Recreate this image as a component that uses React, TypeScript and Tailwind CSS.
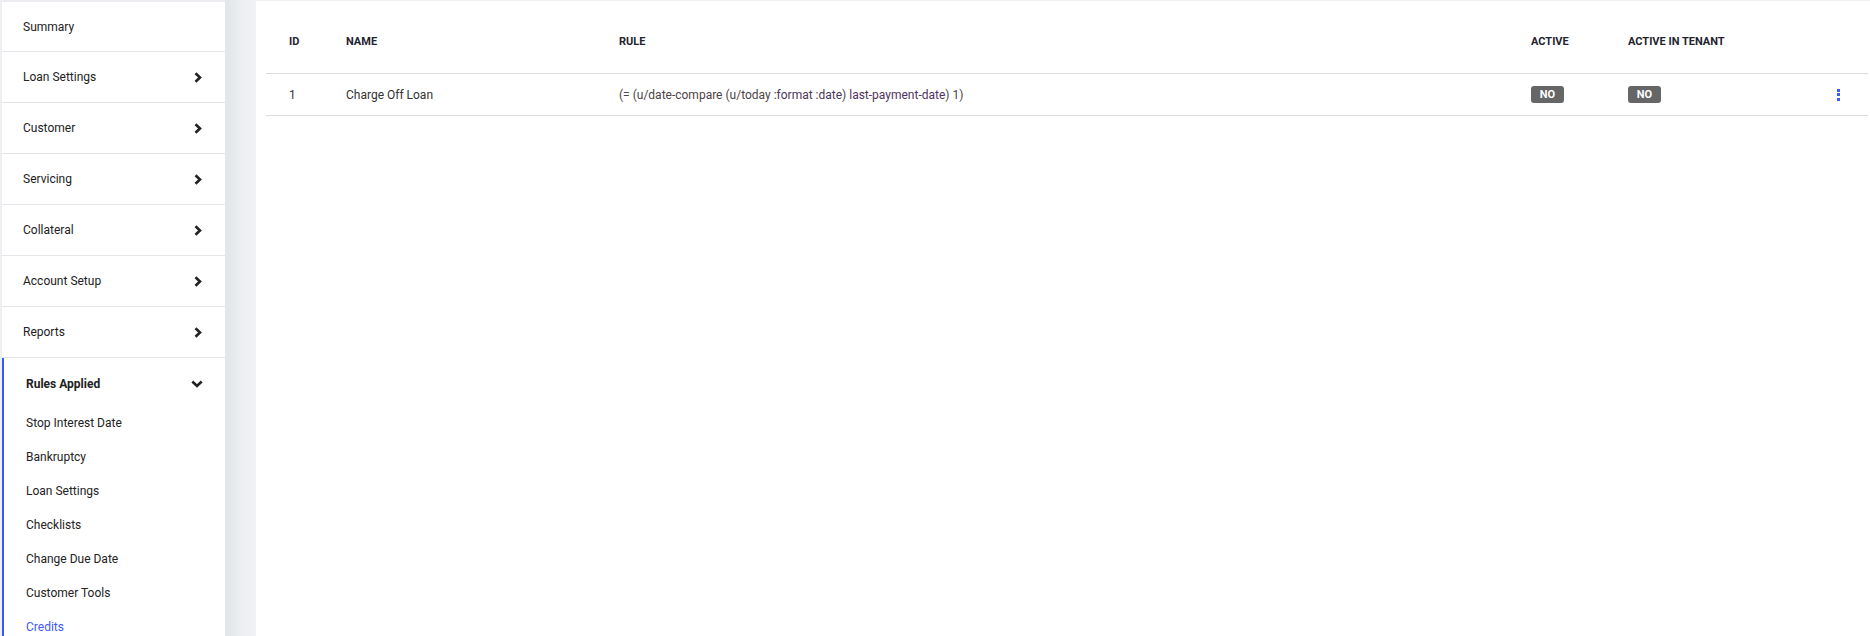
import React from "react";

const font = { fontFamily: "Roboto, 'Noto Sans', Arial, sans-serif" };

function ChevronRight() {
  return (
    <svg width="8" height="11" viewBox="0 0 8 11" className="block">
      <path d="M1.5 1.2 L6 5.5 L1.5 9.8" fill="none" stroke="#222" strokeWidth="2.6" strokeLinejoin="miter" />
    </svg>
  );
}

function ChevronDown() {
  return (
    <svg width="12" height="8" viewBox="0 0 12 8" className="block">
      <path d="M1.3 1.5 L6 6 L10.7 1.5" fill="none" stroke="#222" strokeWidth="2.6" strokeLinejoin="miter" />
    </svg>
  );
}

const topItems = ["Loan Settings", "Customer", "Servicing", "Collateral", "Account Setup", "Reports"];
const subItems = ["Stop Interest Date", "Bankruptcy", "Loan Settings", "Checklists", "Change Due Date", "Customer Tools"];

function Sidebar() {
  return (
    <div className="w-[223px] shrink-0 ml-[2px] mt-[2px] bg-white shadow-[1px_0_3px_rgba(0,0,0,0.06)] flex flex-col text-[12px] text-[#222] overflow-hidden">
      <div className="h-[50px] shrink-0 border-b border-[#e3e5e8] flex items-center pl-[21px]">Summary</div>
      {topItems.map((t) => (
        <div key={t} className="h-[51px] shrink-0 border-b border-[#e3e5e8] flex items-center justify-between pl-[21px] pr-[23px]">
          <span>{t}</span>
          <ChevronRight />
        </div>
      ))}
      <div className="border-l-2 border-[#2f5bff] flex flex-col shrink-0">
        <div className="h-[48px] shrink-0 flex items-center justify-between pl-[22px] pr-[22px] pt-[3px]">
          <span className="font-bold">Rules Applied</span>
          <ChevronDown />
        </div>
        {subItems.map((t) => (
          <div key={t} className="h-[34px] shrink-0 flex items-center pl-[22px]">{t}</div>
        ))}
        <div className="h-[34px] shrink-0 flex items-center pl-[22px] text-[#3d5afe]">Credits</div>
      </div>
    </div>
  );
}

function Badge() {
  return (
    <span className="inline-flex items-center justify-center w-[33px] h-[17px] rounded-[3px] bg-[#666666] text-white text-[11px] font-bold leading-none">
      NO
    </span>
  );
}

function Kebab() {
  return (
    <div className="flex flex-col items-center gap-[1.5px]">
      <span className="block w-[3px] h-[3px] bg-[#3d5afe]" />
      <span className="block w-[3px] h-[3px] bg-[#3d5afe]" />
      <span className="block w-[3px] h-[3px] bg-[#3d5afe]" />
    </div>
  );
}

const cols = "grid grid-cols-[57px_273px_912px_97px_1fr_60px]";

export default function App() {
  return (
    <div style={font} className="w-[1870px] h-[636px] bg-[#eef0f3] flex items-start overflow-hidden">
      <Sidebar />
      <div className="w-[31px] h-[636px] shrink-0 bg-gradient-to-r from-[#e1e4e8] via-[#eceef1] to-[#f0f1f3]" />
      <div className="flex-1 h-[635px] bg-white mt-[1px] pl-[10px] pr-[2px]">
        <div className={`${cols} h-[73px] items-center border-b border-[#dcdcdc] text-[11px] font-bold text-[#1f2430] pt-[10px]`}>
          <div className="pl-[23px]">ID</div>
          <div className="pl-[23px]">NAME</div>
          <div className="pl-[23px]">RULE</div>
          <div className="pl-[23px]">ACTIVE</div>
          <div className="pl-[23px]">ACTIVE IN TENANT</div>
          <div />
        </div>
        <div className={`${cols} h-[42px] items-center border-b border-[#dcdcdc] text-[12px] text-[#333]`}>
          <div className="pl-[23px]">1</div>
          <div className="pl-[23px]">Charge Off Loan</div>
          <div className="pl-[23px] text-[#4d4444]">
            <span>(= (u/date-compare (u/today </span>
            <span className="text-[#4a3658]">:format :date</span>
            <span>) </span>
            <span className="text-[#4f3460]">last-payment-date</span>
            <span>) 1)</span>
          </div>
          <div className="pl-[23px] flex"><Badge /></div>
          <div className="pl-[23px] flex"><Badge /></div>
          <div className="flex justify-center pl-[1px]"><Kebab /></div>
        </div>
      </div>
    </div>
  );
}
